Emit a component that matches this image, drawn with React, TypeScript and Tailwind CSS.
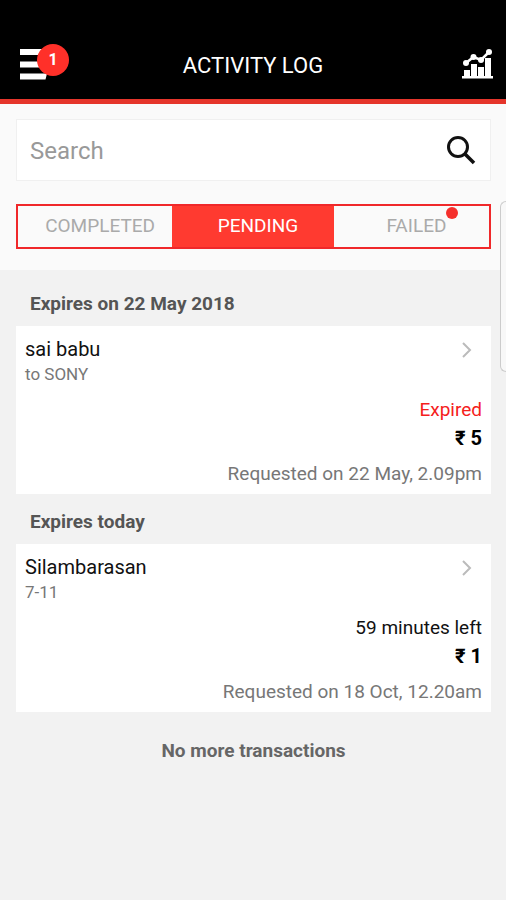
import { useState } from "react";

type Transaction = {
  heading: string;
  name: string;
  detail: string;
  status: string;
  expired: boolean;
  amount: string;
  requested: string;
};

const transactions: Transaction[] = [
  {
    heading: "Expires on 22 May 2018",
    name: "sai babu",
    detail: "to SONY",
    status: "Expired",
    expired: true,
    amount: "₹ 5",
    requested: "Requested on 22 May, 2.09pm",
  },
  {
    heading: "Expires today",
    name: "Silambarasan",
    detail: "7-11",
    status: "59 minutes left",
    expired: false,
    amount: "₹ 1",
    requested: "Requested on 18 Oct, 12.20am",
  },
];

const tabs = [
  { label: "COMPLETED", width: "flex-[154]", alert: false },
  { label: "PENDING", width: "flex-[162]", alert: false },
  { label: "FAILED", width: "flex-[155]", alert: true },
];

function ChartIcon() {
  return (
    <svg width="32" height="32" viewBox="0 0 32 32" fill="#fff" aria-hidden="true">
      <path d="M0 28h31v2.500H0zM2 22h6v7H2zM9 16h6v13H9zM16 19h6v10h-6zM23 10h6v19h-6z" />
      <path d="M4 15L11.500 9L19 12L27 4" fill="none" stroke="#fff" strokeWidth="2.500" />
      <circle cx="4" cy="15" r="3" />
      <circle cx="11.500" cy="9" r="3" />
      <circle cx="19" cy="12" r="3" />
      <circle cx="27" cy="4" r="3" />
    </svg>
  );
}

function Header() {
  return (
    <header className="grid grid-cols-[1fr_auto_1fr] items-center border-b-[5px] border-[#e5352b] bg-black px-3 pt-[34px] pb-[5px] text-white">
      <button type="button" aria-label="Menu, 1 notification" className="relative ml-2 flex h-[60px] w-[50px] items-center">
        <svg width="27" height="31" viewBox="0 0 27 31" fill="#fff" aria-hidden="true">
          <path d="M0 0h27v6H0zM0 12.500h27v6H0zM0 24.500h27l-1.500 6H0z" />
        </svg>
        <span className="absolute top-[10px] left-[17px] flex size-8 items-center justify-center rounded-full bg-[#ff3029] text-base font-bold">
          1
        </span>
      </button>
      <h1 className="pt-1 text-[22px] leading-7">ACTIVITY LOG</h1>
      <button type="button" aria-label="Statistics" className="justify-self-end">
        <ChartIcon />
      </button>
    </header>
  );
}

function TransactionSection({ item }: { item: Transaction }) {
  return (
    <section>
      <h2 className="px-[14px] pt-[14px] pb-2 text-[19px] leading-7 font-bold text-[#555]">{item.heading}</h2>
      <a href="#details" className="block bg-white px-[9px] pt-2 pb-[6px]">
        <div className="flex items-start justify-between">
          <div>
            <p className="text-xl leading-[30px] text-[#111]">{item.name}</p>
            <p className="text-[17px] leading-5 text-[#777]">{item.detail}</p>
          </div>
          <svg className="mt-2 mr-2 h-4 w-[14px]" viewBox="0 0 14 16" fill="none" stroke="#bbb" strokeWidth="2" aria-hidden="true">
            <path d="M3 1l7 7l-7 7" />
          </svg>
        </div>
        <div className="pt-3 text-right text-[19px] leading-7">
          <p className={item.expired ? "text-[#f5201c]" : "text-[#111]"}>{item.status}</p>
          <p className="text-xl leading-7 font-bold text-black">{item.amount}</p>
          <p className="pt-2 text-[#777]">{item.requested}</p>
        </div>
      </a>
    </section>
  );
}

export default function App() {
  const [active, setActive] = useState("PENDING");
  return (
    <div className="relative min-h-screen bg-[#f2f2f2] font-['Roboto',sans-serif]">
      <Header />
      <div className="bg-[#fafafa] pt-[15px] pr-[15px] pb-[21px] pl-4">
        <form role="search" className="flex h-[62px] items-center border border-[#f0f0f0] bg-white px-[13px]">
          <input
            type="search"
            aria-label="Search"
            placeholder="Search"
            className="min-w-0 flex-1 bg-transparent pt-[2px] text-2xl text-[#333] outline-none placeholder:text-[#999]"
          />
          <button type="button" aria-label="Run search">
            <svg width="32" height="32" viewBox="0 0 32 32" fill="none" stroke="#111" strokeWidth="3" aria-hidden="true">
              <circle cx="13" cy="13" r="9.500" />
              <path d="M20 20l9 9" strokeWidth="3.500" />
            </svg>
          </button>
        </form>
        <div role="tablist" className="mt-[23px] flex h-[45px] border-2 border-[#f0282a]">
          {tabs.map((tab) => (
            <button
              key={tab.label}
              type="button"
              role="tab"
              aria-selected={active === tab.label}
              onClick={() => setActive(tab.label)}
              className={`${tab.width} pl-[10px] text-[19px] ${active === tab.label ? "bg-[#ff3a30] text-white" : "text-[#aaa]"}`}
            >
              <span className="relative">
                {tab.label}
                {tab.alert && <span className="absolute -top-[7px] -right-3 size-3 rounded-full bg-[#f5302c]" />}
              </span>
            </button>
          ))}
        </div>
      </div>
      <main className="pt-[6px] pr-[15px] pl-4">
        {transactions.map((item) => (
          <TransactionSection key={item.heading} item={item} />
        ))}
        <p className="pt-[25px] text-center text-[19px] leading-7 font-bold text-[#666]">No more transactions</p>
      </main>
      <div className="absolute top-[201px] right-0 h-[171px] w-[6px] rounded-l-md border border-r-0 border-[#ccc] bg-[#f8f8f8]" />
    </div>
  );
}
